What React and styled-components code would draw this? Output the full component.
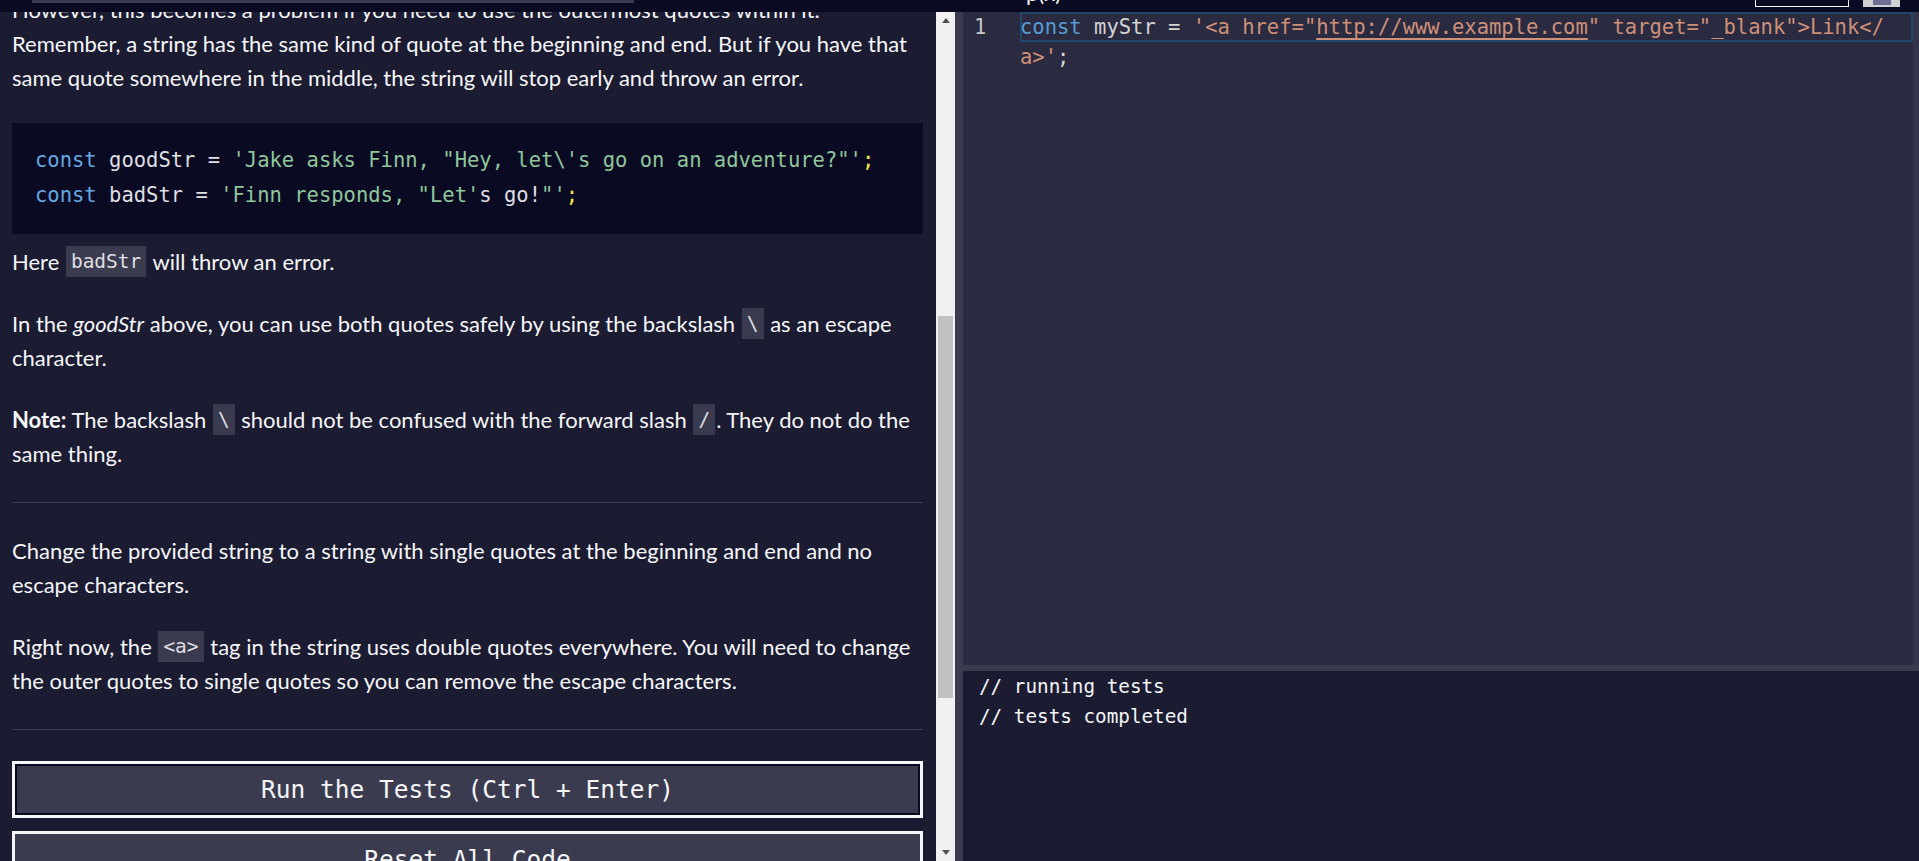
import styled, { createGlobalStyle, css } from 'styled-components'

const colors = {
	dark: '#0a0a23',
	pane: '#1b1b32',
	editor: '#2a2a40',
	tertiary: '#3b3b4f',
	text: '#f5f6f7',
	soft: '#dfdfe2',
}

const mono = `'DejaVu Sans Mono', 'Liberation Mono', monospace`

const GlobalStyle = createGlobalStyle`
	html, body, #root {
		margin: 0;
		height: 100%;
	}
	body {
		background: ${colors.pane};
		overflow: hidden;
		font-family: Lato, 'Open Sans', sans-serif;
	}
	* {
		box-sizing: border-box;
	}
`

const Page = styled.div`
	height: 861px;
	display: flex;
	flex-direction: column;
`

const TopStrip = styled.header`
	height: 12px;
	flex: none;
	display: flex;
	align-items: flex-start;
	background: ${colors.dark};
	overflow: hidden;
`

const TabEdge = styled.div`
	margin-left: 32px;
	width: 602px;
	height: 3px;
	background: ${colors.tertiary};
`

const CutLabel = styled.span`
	margin-left: 392px;
	margin-top: -20px;
	font-size: 22px;
	line-height: 26px;
	color: ${colors.text};
`

const OutlineBox = styled.div`
	margin-left: auto;
	width: 94px;
	height: 7px;
	border: 1px solid ${colors.text};
	border-top: none;
`

const IconBlock = styled.div`
	margin: 0 19px 0 14px;
	width: 37px;
	height: 7px;
	background: #d0d0d5;
	display: flex;
	justify-content: center;
	div {
		width: 18px;
		height: 5px;
		background: #6d6d95;
	}
`

const Main = styled.div`
	flex: 1;
	min-height: 0;
	display: flex;
`

const LeftPane = styled.section`
	width: 936px;
	flex: none;
	overflow: hidden;
	background: ${colors.pane};
	color: ${colors.text};
`

const Content = styled.div`
	margin-top: -19px;
	padding: 0 13px 0 12px;
`

const Para = styled.p`
	margin: 0 0 28px;
	font-size: 22px;
	line-height: 34px;
	em {
		font-style: italic;
	}
	strong {
		font-weight: 700;
	}
`

const InlineCode = styled.code`
	display: inline-block;
	padding: 0 5px;
	background: ${colors.tertiary};
	color: ${colors.soft};
	font-family: ${mono};
	font-size: 19.5px;
	line-height: 31px;
	vertical-align: top;
	margin: 1px 1px 0;
`

const CodeBlock = styled.pre`
	margin: 0 0 11px;
	padding: 20px 23px 21px;
	background: ${colors.dark};
	font-family: ${mono};
	font-size: 20.5px;
	line-height: 35px;
	color: ${colors.soft};
`

const tokenColors = {
	keyword: '#66a8e0',
	string: '#8fc79b',
	punct: '#f1e64a',
	plain: '#dfdfe2',
}

const Tok = styled.span`
	color: ${p => tokenColors[p.$kind] || 'inherit'};
`

const Rule = styled.hr`
	margin: 31px 0 31px;
	border: none;
	height: 1px;
	background: ${colors.tertiary};
`

const Button = styled.button`
	display: block;
	width: 100%;
	height: 57px;
	margin: 0 0 13px;
	border: 3px solid ${colors.text};
	background: ${colors.tertiary};
	color: ${colors.text};
	font-family: ${mono};
	font-size: 24.5px;
	${p => p.$focused && css`
		box-shadow: inset 0 0 0 2px ${colors.dark};
	`}
`

const ScrollBar = styled.div`
	width: 19px;
	flex: none;
	display: flex;
	flex-direction: column;
	background: #f1f1f1;
`

const Arrow = styled.div`
	height: 17px;
	flex: none;
	display: flex;
	align-items: center;
	justify-content: center;
	&::before {
		content: '';
		border-left: 4px solid transparent;
		border-right: 4px solid transparent;
		${p => p.$down
			? css`border-top: 5px solid #505050;`
			: css`border-bottom: 5px solid #505050;`}
	}
`

const Track = styled.div`
	flex: 1;
	padding: 287px 2px 0;
`

const Thumb = styled.div`
	height: 382px;
	background: #c1c1c1;
`

const Splitter = styled.div`
	width: 8px;
	flex: none;
	background: ${colors.tertiary};
`

const RightPane = styled.section`
	flex: 1;
	display: flex;
	flex-direction: column;
	min-width: 0;
`

const Editor = styled.div`
	height: 653px;
	flex: none;
	display: flex;
	background: ${colors.editor};
	font-family: ${mono};
	font-size: 20.5px;
	line-height: 30px;
`

const Gutter = styled.div`
	width: 57px;
	flex: none;
	padding-left: 11px;
	color: #c6c6cc;
`

const Lines = styled.div`
	flex: 1;
	min-width: 0;
	white-space: pre;
`

const Line = styled.div`
	height: 30px;
	color: #d4d4d4;
	${p => p.$current && css`
		box-shadow: inset 0 0 0 2px #21486b;
	`}
`

const edColors = {
	keyword: '#569cd6',
	string: '#ce9178',
	plain: '#d4d4d4',
}

const Ed = styled.span`
	color: ${p => edColors[p.$kind]};
	${p => p.$link && css`
		text-decoration: underline;
		text-underline-offset: 4px;
	`}
`

const EditorScroll = styled.div`
	width: 6px;
	flex: none;
	background: #34344a;
`

const HSplit = styled.div`
	height: 6px;
	flex: none;
	background: ${colors.tertiary};
`

const Console = styled.pre`
	flex: 1;
	margin: 0;
	padding: 1px 16px;
	background: ${colors.pane};
	color: ${colors.text};
	font-family: ${mono};
	font-size: 19.3px;
	line-height: 30px;
`

const App = () => (
	<>
		<GlobalStyle/>
		<Page>
			<TopStrip>
				<TabEdge/>
				<CutLabel>p(x)</CutLabel>
				<OutlineBox/>
				<IconBlock><div/></IconBlock>
			</TopStrip>
			<Main>
				<LeftPane>
					<Content>
						<Para>
							However, this becomes a problem if you need to use the outermost quotes within it. Remember, a string has the same kind of quote at the beginning and end. But if you have that same quote somewhere in the middle, the string will stop early and throw an error.
						</Para>
						<CodeBlock>
							<Tok $kind='keyword'>const</Tok> goodStr = <Tok $kind='string'>'Jake asks Finn, "Hey, let\'s go on an adventure?"'</Tok><Tok $kind='punct'>;</Tok>{'\n'}
							<Tok $kind='keyword'>const</Tok> badStr = <Tok $kind='string'>'Finn responds, "Let'</Tok>s go!<Tok $kind='string'>"'</Tok><Tok $kind='punct'>;</Tok>
						</CodeBlock>
						<Para>
							Here <InlineCode>badStr</InlineCode> will throw an error.
						</Para>
						<Para>
							In the <em>goodStr</em> above, you can use both quotes safely by using the backslash <InlineCode>\</InlineCode> as an escape character.
						</Para>
						<Para>
							<strong>Note:</strong> The backslash <InlineCode>\</InlineCode> should not be confused with the forward slash <InlineCode>/</InlineCode>. They do not do the same thing.
						</Para>
						<Rule/>
						<Para>
							Change the provided string to a string with single quotes at the beginning and end and no escape characters.
						</Para>
						<Para>
							Right now, the <InlineCode>&lt;a&gt;</InlineCode> tag in the string uses double quotes everywhere. You will need to change the outer quotes to single quotes so you can remove the escape characters.
						</Para>
						<Rule/>
						<Button $focused>Run the Tests (Ctrl + Enter)</Button>
						<Button>Reset All Code</Button>
					</Content>
				</LeftPane>
				<ScrollBar>
					<Arrow/>
					<Track><Thumb/></Track>
					<Arrow $down/>
				</ScrollBar>
				<Splitter/>
				<RightPane>
					<Editor>
						<Gutter>1</Gutter>
						<Lines>
							<Line $current>
								<Ed $kind='keyword'>const</Ed> myStr = <Ed $kind='string'>'&lt;a href="<Ed $kind='string' $link>http://www.example.com</Ed>" target="_blank"&gt;Link&lt;/</Ed>
							</Line>
							<Line>
								<Ed $kind='string'>a&gt;'</Ed>;
							</Line>
						</Lines>
						<EditorScroll/>
					</Editor>
					<HSplit/>
					<Console>{'// running tests\n// tests completed'}</Console>
				</RightPane>
			</Main>
		</Page>
	</>
)

export default App
